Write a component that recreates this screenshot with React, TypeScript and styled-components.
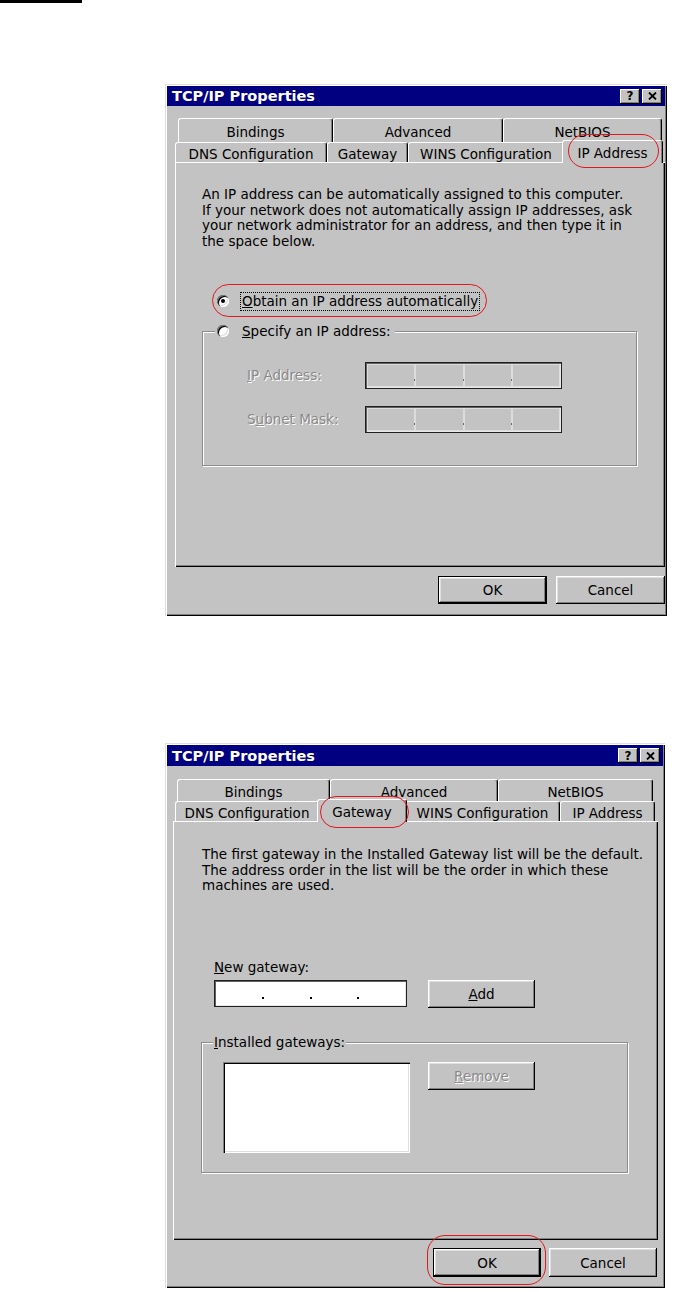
import React, { ReactNode } from 'react'
import styled, { createGlobalStyle, css } from 'styled-components'

const FACE = '#c3c3c3'

const GlobalStyle = createGlobalStyle`
  html, body {
    margin: 0;
    padding: 0;
    background: #fff;
  }
  body {
    font-family: "DejaVu Sans", "Liberation Sans", sans-serif;
    font-size: 13.5px;
    color: #000;
  }
`

const Page = styled.main`
  width: 680px;
  height: 1292px;
  overflow: hidden;
  display: flex;
  flex-direction: column;
`

const TopRule = styled.div`
  flex: none;
  width: 82px;
  height: 3px;
  background: #000;
`

const Window = styled.section<{ $top: number; $width: number; $height: number }>`
  flex: none;
  margin: ${p => p.$top}px 0 0 165px;
  width: ${p => p.$width}px;
  height: ${p => p.$height}px;
  box-sizing: border-box;
  padding: 2px;
  background: ${FACE};
  box-shadow: inset 1px 1px #dfdfdf, inset 2px 2px #fff, inset -1px -1px #000, inset -2px -2px #808080;
  display: flex;
  flex-direction: column;
`

const TitleBar = styled.header<{ $h: number }>`
  flex: none;
  height: ${p => p.$h}px;
  display: flex;
  align-items: center;
  padding: 0 3px 0 5px;
  background: #000080;
  color: #fff;
  font-weight: bold;
  font-size: 14.5px;
`

const TitleText = styled.span`
  flex: 1;
`

const TitleButtons = styled.div`
  display: flex;
  gap: 2px;
`

const TitleButton = styled.span`
  width: 20px;
  height: 15px;
  box-sizing: border-box;
  background: ${FACE};
  color: #000;
  font-size: 12px;
  font-weight: bold;
  display: flex;
  align-items: center;
  justify-content: center;
  box-shadow: inset -1px -1px #000, inset 1px 1px #fff, inset -2px -2px #808080;
`

const TabStrip = styled.div<{ $top: number }>`
  flex: none;
  margin-top: ${p => p.$top}px;
  display: flex;
  flex-direction: column;
`

const TabRow = styled.div<{ $indent: number; $h: number }>`
  display: flex;
  height: ${p => p.$h}px;
  padding-left: ${p => p.$indent}px;
`

const Tab = styled.div<{ $w: number; $active?: boolean }>`
  position: relative;
  flex: none;
  width: ${p => p.$w}px;
  box-sizing: border-box;
  padding-top: 2px;
  border-top: 1px solid #fff;
  border-left: 1px solid #fff;
  border-right: 1px solid #000;
  border-radius: 3px 3px 0 0;
  box-shadow: inset -1px 0 #808080;
  background: ${FACE};
  display: flex;
  align-items: center;
  justify-content: center;
  white-space: nowrap;
  ${p =>
    p.$active &&
    css`
      z-index: 2;
      width: ${p.$w + 4}px;
      margin: -2px -2px -1px;
    `}
`

const Panel = styled.div<{ $w: number; $ml: number; $h: number; $pad: string }>`
  flex: none;
  width: ${p => p.$w}px;
  height: ${p => p.$h}px;
  margin-left: ${p => p.$ml}px;
  box-sizing: border-box;
  padding: ${p => p.$pad};
  box-shadow: inset 1px 1px #fff, inset -1px -1px #000, inset -2px -2px #808080;
  display: flex;
  flex-direction: column;
  align-items: flex-start;
`

const Footer = styled.div<{ $top: number; $gap: number; $right: number }>`
  flex: none;
  display: flex;
  justify-content: flex-end;
  margin-top: ${p => p.$top}px;
  gap: ${p => p.$gap}px;
  padding-right: ${p => p.$right}px;
`

const Button = styled.button<{ $w: number; $h: number; $ml?: number; $default?: boolean }>`
  position: relative;
  flex: none;
  width: ${p => p.$w}px;
  height: ${p => p.$h}px;
  margin-left: ${p => p.$ml ?? 0}px;
  box-sizing: border-box;
  padding: 0;
  border: 0;
  background: ${FACE};
  font: inherit;
  color: #000;
  box-shadow: inset -1px -1px #000, inset 1px 1px #fff, inset -2px -2px #808080, inset 2px 2px #dfdfdf;
  ${p =>
    p.$default &&
    css`
      box-shadow: inset 0 0 0 1px #000, inset -2px -2px #000, inset 2px 2px #fff, inset -3px -3px #808080,
        inset 3px 3px #dfdfdf;
    `}
  &:disabled {
    color: #8a8a8a;
    text-shadow: 1px 1px #fff;
  }
`

const Callout = styled.span<{ $t: number; $r: number; $b: number; $l: number }>`
  position: absolute;
  top: ${p => p.$t}px;
  right: ${p => p.$r}px;
  bottom: ${p => p.$b}px;
  left: ${p => p.$l}px;
  border: 1.5px solid #e3161d;
  border-radius: 18px;
  pointer-events: none;
`

const Intro = styled.p`
  margin: 0;
  line-height: 15.7px;
  white-space: nowrap;
`

const Key = styled.u`
  text-decoration: underline;
`

const RadioRow = styled.div<{ $mt?: number; $ml?: number }>`
  position: relative;
  display: flex;
  align-items: center;
  gap: 11px;
  height: 19px;
  margin-top: ${p => p.$mt ?? 0}px;
  margin-left: ${p => p.$ml ?? 0}px;
`

const RadioDot = styled.span<{ $checked?: boolean }>`
  position: relative;
  flex: none;
  width: 12px;
  height: 12px;
  border-radius: 50%;
  background: #fff;
  box-shadow: inset 1px 1px #808080, inset 2px 2px #000, inset -1px -1px #fff, inset -2px -2px #dfdfdf;
  ${p =>
    p.$checked &&
    css`
      &::after {
        content: '';
        position: absolute;
        left: 4px;
        top: 4px;
        width: 4px;
        height: 4px;
        border-radius: 50%;
        background: #000;
      }
    `}
`

const FocusLabel = styled.span<{ $focused?: boolean }>`
  padding: 0 1px;
  line-height: 17px;
  white-space: nowrap;
  border: 1px dotted ${p => (p.$focused ? '#000' : 'transparent')};
`

const Group = styled.fieldset<{ $w: number; $mt: number; $ml?: number; $pb: number }>`
  flex: none;
  width: ${p => p.$w}px;
  box-sizing: border-box;
  min-inline-size: 0;
  margin: ${p => p.$mt}px 0 0 ${p => p.$ml ?? 0}px;
  padding: 0 0 ${p => p.$pb}px;
  border: 1px solid #8c8c8c;
  box-shadow: inset 1px 1px #fff, 1px 1px #fff;
`

const Legend = styled.legend<{ $ml: number; $pad: number }>`
  margin-left: ${p => p.$ml}px;
  padding: 0 ${p => p.$pad}px;
  background: ${FACE};
  line-height: 16px;
`

const FieldRow = styled.div<{ $mt: number; $pl: number }>`
  display: flex;
  align-items: center;
  margin-top: ${p => p.$mt}px;
  padding-left: ${p => p.$pl}px;
`

const FieldLabel = styled.span<{ $w: number; $disabled?: boolean }>`
  flex: none;
  width: ${p => p.$w}px;
  white-space: nowrap;
  ${p =>
    p.$disabled &&
    css`
      color: #8a8a8a;
      text-shadow: 1px 1px #fff;
    `}
`

const PlainLabel = styled.div<{ $mt: number; $ml: number }>`
  margin: ${p => p.$mt}px 0 0 ${p => p.$ml}px;
  line-height: 16px;
`

const IpField = styled.div<{ $w: number; $h: number; $disabled?: boolean }>`
  flex: none;
  width: ${p => p.$w}px;
  height: ${p => p.$h}px;
  box-sizing: border-box;
  padding: 2px;
  display: grid;
  grid-template-columns: repeat(4, 1fr);
  background: ${p => (p.$disabled ? FACE : '#fff')};
  box-shadow: inset 1px 1px #202020, inset -1px -1px #202020, inset 2px 2px #606060, inset -2px -2px #e8e8e8;
`

const Octet = styled.span<{ $dot: boolean; $disabled?: boolean }>`
  position: relative;
  ${p =>
    p.$disabled &&
    css`
      box-shadow: inset 0 0 0 1px #dcdcdc;
    `}
  ${p =>
    p.$dot &&
    css`
      &::after {
        content: '';
        position: absolute;
        right: -1px;
        bottom: 6px;
        width: 2px;
        height: 2px;
        background: ${p.$disabled ? '#6a6a6a' : '#000'};
      }
    `}
`

const InputRow = styled.div<{ $mt: number; $ml: number }>`
  display: flex;
  align-items: flex-start;
  margin: ${p => p.$mt}px 0 0 ${p => p.$ml}px;
`

const ListRow = styled.div<{ $mt: number; $pl: number }>`
  display: flex;
  align-items: flex-start;
  margin-top: ${p => p.$mt}px;
  padding-left: ${p => p.$pl}px;
`

const ListBox = styled.div<{ $w: number; $h: number }>`
  flex: none;
  width: ${p => p.$w}px;
  height: ${p => p.$h}px;
  background: #fff;
  box-shadow: inset 1px 1px #808080, inset 2px 2px #000, inset -1px -1px #fff, inset -2px -2px #dfdfdf;
`

type Mark = { t: number; r: number; b: number; l: number }
type TabSpec = { label: string; w: number; active?: boolean; mark?: Mark }
type TabRowSpec = { indent: number; h: number; tabs: TabSpec[] }

interface DialogProps {
  top: number
  width: number
  height: number
  titleH: number
  tabsTop: number
  back: TabRowSpec
  front: TabRowSpec
  panel: { w: number; ml: number; h: number; pad: string }
  footer: { top: number; gap: number; right: number; w: number; h: number; okMark?: Mark }
  children: ReactNode
}

function Octets({ w, h, disabled }: { w: number; h: number; disabled?: boolean }) {
  return (
    <IpField $w={w} $h={h} $disabled={disabled}>
      {[0, 1, 2, 3].map(i => (
        <Octet key={i} $dot={i < 3} $disabled={disabled} />
      ))}
    </IpField>
  )
}

function Dialog({ top, width, height, titleH, tabsTop, back, front, panel, footer, children }: DialogProps) {
  return (
    <Window $top={top} $width={width} $height={height}>
      <TitleBar $h={titleH}>
        <TitleText>TCP/IP Properties</TitleText>
        <TitleButtons>
          <TitleButton>?</TitleButton>
          <TitleButton>
            <svg width="9" height="8" viewBox="0 0 9 8">
              <path d="M1 0.5 L8 7.5 M8 0.5 L1 7.5" stroke="#000" strokeWidth="1.8" />
            </svg>
          </TitleButton>
        </TitleButtons>
      </TitleBar>
      <TabStrip $top={tabsTop}>
        {[back, front].map((row, ri) => (
          <TabRow key={ri} $indent={row.indent} $h={row.h}>
            {row.tabs.map(t => (
              <Tab key={t.label} $w={t.w} $active={t.active}>
                {t.label}
                {t.mark && <Callout $t={t.mark.t} $r={t.mark.r} $b={t.mark.b} $l={t.mark.l} />}
              </Tab>
            ))}
          </TabRow>
        ))}
      </TabStrip>
      <Panel $w={panel.w} $ml={panel.ml} $h={panel.h} $pad={panel.pad}>
        {children}
      </Panel>
      <Footer $top={footer.top} $gap={footer.gap} $right={footer.right}>
        <Button $w={footer.w} $h={footer.h} $default>
          OK
          {footer.okMark && (
            <Callout $t={footer.okMark.t} $r={footer.okMark.r} $b={footer.okMark.b} $l={footer.okMark.l} />
          )}
        </Button>
        <Button $w={footer.w} $h={footer.h}>
          Cancel
        </Button>
      </Footer>
    </Window>
  )
}

export default function App() {
  return (
    <Page>
      <GlobalStyle />
      <TopRule />

      <Dialog
        top={81}
        width={502}
        height={532}
        titleH={20}
        tabsTop={12}
        back={{
          indent: 11,
          h: 24,
          tabs: [
            { label: 'Bindings', w: 155 },
            { label: 'Advanced', w: 170 },
            { label: 'NetBIOS', w: 159 },
          ],
        }}
        front={{
          indent: 8,
          h: 20,
          tabs: [
            { label: 'DNS Configuration', w: 152 },
            { label: 'Gateway', w: 81 },
            { label: 'WINS Configuration', w: 156 },
            { label: 'IP Address', w: 97, active: true, mark: { t: -7, r: 3, b: -5, l: 5 } },
          ],
        }}
        panel={{ w: 490, ml: 8, h: 405, pad: '25px 0 0 27px' }}
        footer={{ top: 9, gap: 9, right: 0, w: 109, h: 28 }}
      >
        <Intro>
          An IP address can be automatically assigned to this computer.
          <br />
          If your network does not automatically assign IP addresses, ask
          <br />
          your network administrator for an address, and then type it in
          <br />
          the space below.
        </Intro>
        <RadioRow $mt={42} $ml={15}>
          <RadioDot $checked />
          <FocusLabel $focused>
            <Key>O</Key>btain an IP address automatically
          </FocusLabel>
          <Callout $t={-8} $r={-7} $b={-6} $l={-5} />
        </RadioRow>
        <Group $w={435} $mt={11} $pb={32}>
          <Legend $ml={12} $pad={2}>
            <RadioRow>
              <RadioDot />
              <FocusLabel>
                <Key>S</Key>pecify an IP address:
              </FocusLabel>
            </RadioRow>
          </Legend>
          <FieldRow $mt={21} $pl={44}>
            <FieldLabel $w={118} $disabled>
              <Key>I</Key>P Address:
            </FieldLabel>
            <Octets w={197} h={27} disabled />
          </FieldRow>
          <FieldRow $mt={17} $pl={44}>
            <FieldLabel $w={118} $disabled>
              S<Key>u</Key>bnet Mask:
            </FieldLabel>
            <Octets w={197} h={27} disabled />
          </FieldRow>
        </Group>
      </Dialog>

      <Dialog
        top={127}
        width={500}
        height={545}
        titleH={21}
        tabsTop={13}
        back={{
          indent: 10,
          h: 22,
          tabs: [
            { label: 'Bindings', w: 153 },
            { label: 'Advanced', w: 168 },
            { label: 'NetBIOS', w: 155 },
          ],
        }}
        front={{
          indent: 8,
          h: 20,
          tabs: [
            { label: 'DNS Configuration', w: 144 },
            { label: 'Gateway', w: 86, active: true, mark: { t: -4, r: -3, b: -6, l: 2 } },
            { label: 'WINS Configuration', w: 155 },
            { label: 'IP Address', w: 95 },
          ],
        }}
        panel={{ w: 485, ml: 6, h: 419, pad: '26px 0 0 29px' }}
        footer={{ top: 8, gap: 8, right: 6, w: 108, h: 29, okMark: { t: -13, r: -5, b: -8, l: -6 } }}
      >
        <Intro>
          The first gateway in the Installed Gateway list will be the default.
          <br />
          The address order in the list will be the order in which these
          <br />
          machines are used.
        </Intro>
        <PlainLabel $mt={65} $ml={12}>
          <Key>N</Key>ew gateway:
        </PlainLabel>
        <InputRow $mt={5} $ml={12}>
          <Octets w={193} h={27} />
          <Button $w={107} $h={28} $ml={21}>
            <Key>A</Key>dd
          </Button>
        </InputRow>
        <Group $w={427} $mt={26} $ml={-1} $pb={19}>
          <Legend $ml={11} $pad={1}>
            <Key>I</Key>nstalled gateways:
          </Legend>
          <ListRow $mt={12} $pl={21}>
            <ListBox $w={187} $h={91} />
            <Button $w={107} $h={28} $ml={18} disabled>
              <Key>R</Key>emove
            </Button>
          </ListRow>
        </Group>
      </Dialog>
    </Page>
  )
}
